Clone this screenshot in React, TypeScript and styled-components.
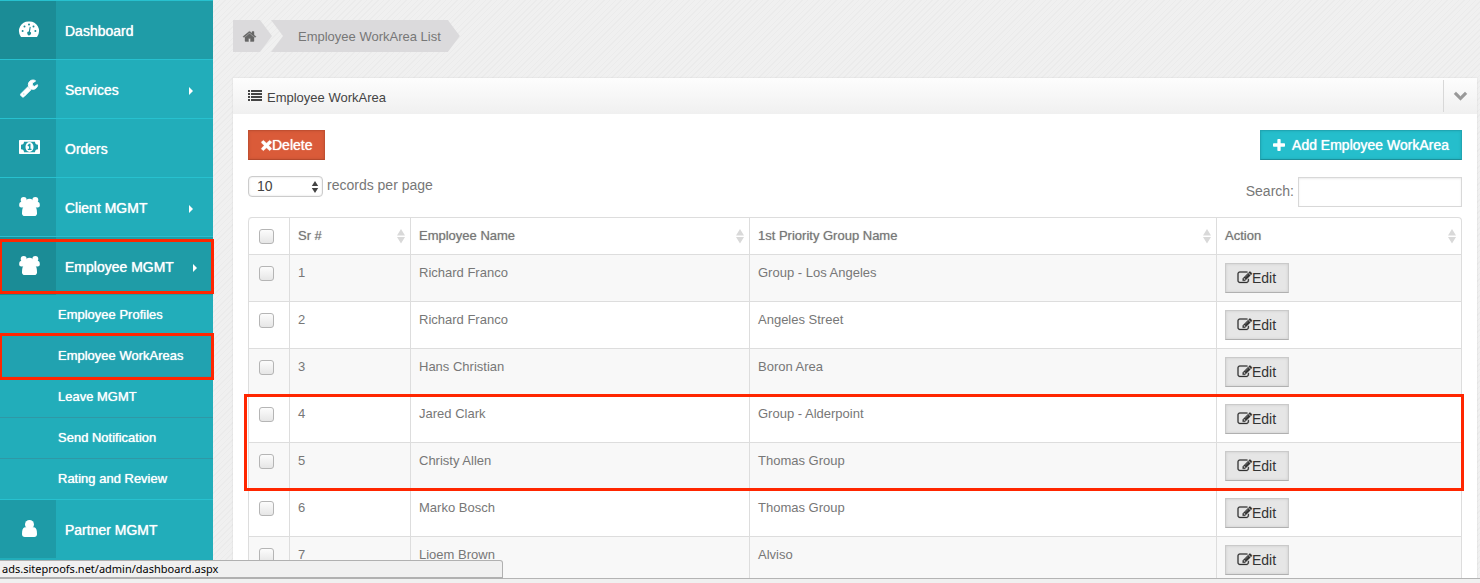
import React from "react";
import styled, { createGlobalStyle, css } from "styled-components";

const GlobalStyle = createGlobalStyle`
  *, *::before, *::after { box-sizing: border-box; }
  body {
    margin: 0;
    font-family: "Liberation Sans", Arial, sans-serif;
    font-size: 13px;
    line-height: 20px;
    color: #777;
  }
`;

/* ---------- icons ---------- */

type GlyphShape = { box: string; d: string; stroke?: number };

const glyphs = {
  home: {
    box: "64 64 1664 1664",
    stroke: 50,
    d: "M1472 992v480q0 26-19 45t-45 19h-384v-384h-256v384h-384q-26 0-45-19t-19-45v-480q0-1 .5-3t.5-3l575-474 575 474q1 2 1 6zm223-69l-62 74q-8 9-21 11h-3q-13 0-21-7l-692-577-692 577q-12 8-24 7-13-2-21-11l-62-74q-8-10-7-23.5t11-21.5l719-599q32-26 76-26t76 26l244 204v-195q0-14 9-23t23-9h192q14 0 23 9t9 23v408l219 182q10 8 11 21.5t-7 23.5z",
  },
  remove: {
    box: "256 320 1280 1280",
    stroke: 40,
    d: "M1490 1322q0 40-28 68l-136 136q-28 28-68 28t-68-28l-294-294-294 294q-28 28-68 28t-68-28l-136-136q-28-28-28-68t28-68l294-294-294-294q-28-28-28-68t28-68l136-136q28-28 68-28t68 28l294 294 294-294q28-28 68-28t68 28l136 136q28 28 28 68t-28 68l-294 294 294 294q28 28 28 68z",
  },
  plus: {
    box: "192 128 1408 1408",
    d: "M1600 736v192q0 40-28 68t-68 28h-416v416q0 40-28 68t-68 28h-192q-40 0-68-28t-28-68v-416h-416q-40 0-68-28t-28-68v-192q0-40 28-68t68-28h416v-416q0-40 28-68t68-28h192q40 0 68 28t28 68v416h416q40 0 68 28t28 68z",
  },
  edit: {
    box: "64 64 1728 1728",
    stroke: 36,
    d: "M888 1184l116-116-152-152-116 116v56h96v96h56zm440-720q-16-16-33 1l-350 350q-17 17-1 33t33-1l350-350q17-17 1-33zm80 594v190q0 119-84.5 203.5t-203.5 84.5h-832q-119 0-203.5-84.5t-84.5-203.5v-832q0-119 84.5-203.5t203.5-84.5h832q63 0 117 25 15 7 18 23 3 17-9 29l-49 49q-14 14-32 8-23-6-45-6h-832q-66 0-113 47t-47 113v832q0 66 47 113t113 47h832q66 0 113-47t47-113v-126q0-13 9-22l64-64q15-15 35-7t20 29zm-96-738l288 288-672 672h-288v-288zm444 132l-92 92-288-288 92-92q28-28 68-28t68 28l152 152q28 28 28 68t-28 68z",
  },
  wrench: {
    box: "32 32 1728 1728",
    stroke: 90,
    d: "M448 1472q0-26-19-45t-45-19-45 19-19 45 19 45 45 19 45-19 19-45zm644-420l-682 682q-37 37-90 37-52 0-91-37l-106-108q-38-36-38-90 0-53 38-91l681-681q39 98 114.5 173.5t173.5 114.5zm634-435q0 39-23 106-47 134-164.5 217.5t-258.5 83.5q-185 0-316.5-131.5t-131.5-316.5 131.5-316.5 316.5-131.5q58 0 121.5 16.5t107.5 46.5q16 11 16 28t-16 28l-293 169v224l193 107q5-3 79-48.5t135.5-81 70.5-35.5q15 0 23.5 10t8.5 25z",
  },
  chevron: {
    box: "64 260 1664 1664",
    stroke: 60,
    d: "M1683 808l-742 741q-19 19-45 19t-45-19l-742-741q-19-19-19-45.5t19-45.5l166-165q19-19 45-19t45 19l531 531 531-531q19-19 45-19t45 19l166 165q19 19 19 45.5t-19 45.5z",
  },
} satisfies Record<string, GlyphShape>;

const Svg = styled.svg<{ $w: number; $h: number }>`
  display: block;
  flex: none;
  width: ${(p) => p.$w}px;
  height: ${(p) => p.$h}px;
  fill: currentColor;
  overflow: visible;
`;

const Glyph = ({ name, size = 14 }: { name: keyof typeof glyphs; size?: number }) => {
  const g: GlyphShape = glyphs[name];
  return (
    <Svg $w={size} $h={size} viewBox={g.box} aria-hidden="true">
      <path d={g.d} stroke="currentColor" strokeWidth={g.stroke ?? 0} />
    </Svg>
  );
};

const DashboardIcon = () => (
  <Svg $w={20} $h={17} viewBox="0 0 20 17" aria-hidden="true">
    <path d="M10 .5a9.5 9.5 0 0 0-8.3 14.9q.3.6 1 .6h14.6q.7 0 1-.6A9.5 9.5 0 0 0 10 .5z" />
    <g fill="#1c8c96">
      <circle cx="3.6" cy="10" r="1" />
      <circle cx="5.5" cy="5.6" r="1" />
      <circle cx="10" cy="3.6" r="1" />
      <circle cx="14.5" cy="5.6" r="1" />
      <circle cx="16.4" cy="10" r="1" />
      <path d="M10.7 5.8l1 .2-.7 4.8a1.8 1.8 0 1 1-1.2-.2z" />
    </g>
  </Svg>
);

const MoneyIcon = () => (
  <Svg $w={21} $h={14} viewBox="0 0 21 14" aria-hidden="true">
    <path
      fillRule="evenodd"
      d="M.7 0h19.6q.7 0 .7.7v12.6q0 .7-.7.7H.7q-.7 0-.7-.7V.7Q0 0 .7 0zM5 1.7a3 3 0 0 1-3 3v4.6a3 3 0 0 1 3 3h11a3 3 0 0 1 3-3V4.7a3 3 0 0 1-3-3z"
    />
    <ellipse cx="10.5" cy="7" rx="4" ry="5" />
    <path fill="#1f9ca7" d="M10 3.8h1.5v5h1V10H8.8V8.8H10V5.9l-.8.5-.7-.9z" />
  </Svg>
);

const GroupIcon = () => (
  <Svg $w={21} $h={19} viewBox="0 0 21 19" aria-hidden="true">
    <circle cx="4.7" cy="3" r="3" />
    <circle cx="16.3" cy="3" r="3" />
    <path d="M.2 8Q.2 5 2 5h5v5.500H2.300Q.2 10.500.2 8.800zM20.800 8q0-3-1.800-3h-5v5.500h4.700q2.100 0 2.100-1.700z" />
    <circle cx="10.5" cy="6.500" r="4.700" />
    <path d="M5.500 9h10c1.900.8 2.500 3.500 2.500 7.200 0 1.900-1 2.800-2.700 2.800H5.700C4 19 3 18.100 3 16.200 3 12.500 3.600 9.800 5.500 9z" />
  </Svg>
);

const UserIcon = () => (
  <Svg $w={15} $h={17} viewBox="0 0 15 17" aria-hidden="true">
    <circle cx="7.5" cy="4.500" r="4.500" />
    <path d="M2.800 7.300h9.400C14.400 8 15 10.500 15 14c0 2-1 3-2.800 3H2.800C1 17 0 16 0 14c0-3.500.6-6 2.800-6.700z" />
  </Svg>
);

const ListIcon = () => (
  <Svg $w={14} $h={12} viewBox="0 0 14 12" aria-hidden="true">
    <path d="M0 0h2v2H0zM3 0h11v2H3zM0 3h2v2H0zM3 3h11v2H3zM0 6h2v2H0zM3 6h11v2H3zM0 9h2v2H0zM3 9h11v2H3z" />
  </Svg>
);

const SortIcon = () => (
  <Svg $w={8} $h={16} viewBox="0 0 8 16" aria-hidden="true">
    <path d="M4 1l4 6.5H0zM4 15.5L0 9h8z" />
  </Svg>
);

/* ---------- page frame ---------- */

const Page = styled.div`
  position: relative;
  display: flex;
  flex-direction: column;
  height: 100vh;
  background: #f0f0f0;
`;

const Viewport = styled.div`
  flex: 1;
  min-height: 0;
  display: flex;
  overflow: hidden;
  background-color: #efefef;
  background-image: repeating-linear-gradient(135deg, #f0f0f0 0 3px, #ebebeb 3px 4px);
  border-bottom: 1px solid #b4b4b4;
`;

const WindowEdge = styled.div`
  height: 4px;
  background: #f0f0f0;
`;

const StatusBar = styled.div`
  position: absolute;
  left: 0;
  bottom: 4px;
  z-index: 2;
  width: 34%;
  height: 19px;
  padding-left: 2px;
  border: solid #b0b0b0;
  border-width: 1px 1px 2px 0;
  border-top-right-radius: 3px;
  background: #f0f0f0;
  color: #000;
  font: 11px/16px "Noto Sans", sans-serif;
`;

const outline = css`
  content: "";
  position: absolute;
  border: 3px solid #ff2600;
  pointer-events: none;
`;

/* ---------- sidebar ---------- */

const Sidebar = styled.nav`
  flex: none;
  width: 213px;
  background: #22adba;
  position: relative;
`;

const Menu = styled.ul`
  list-style: none;
  margin: 0;
  padding: 0;
`;

const MenuItem = styled.li<{ $marked?: boolean }>`
  position: relative;
  ${(p) =>
    p.$marked &&
    css`
      &::after {
        ${outline}
        z-index: 1;
        inset: 3px -1px 1px;
      }
    `}
`;

const MenuLink = styled.a<{ $active?: boolean; $open?: boolean }>`
  display: flex;
  align-items: center;
  height: 59px;
  padding-right: ${(p) => (p.$open ? 16 : 20)}px;
  border-top: 1px solid #27c1cf;
  background: ${(p) => (p.$active ? "#1f9ca7" : "transparent")};
  color: #fff;
  font-size: 14px;
  text-decoration: none;
  text-shadow: 0 0 1px #fff;
`;

const MenuIcon = styled.span`
  display: flex;
  align-items: center;
  justify-content: center;
  width: 56px;
  height: 100%;
  padding: 0 0 2px 2px;
  background: rgba(0, 0, 0, 0.1);
`;

const MenuText = styled.span`
  flex: 1;
  padding: 1px 0 0 9px;
`;

const Caret = styled.span`
  margin-top: 4px;
  border: solid transparent;
  border-width: 4px 0 4px 4px;
  border-left-color: #fff;
`;

const SubLink = styled.a<{ $active?: boolean }>`
  display: block;
  padding: 10px 0 10px 58px;
  background: ${(p) => (p.$active ? "#21a2b0" : "transparent")};
  color: #fff;
  text-decoration: none;
  text-shadow: 0 0 1px #fff;
`;

const SubItem = styled.li<{ $marked?: boolean }>`
  position: relative;
  & + & {
    border-top: 1px solid #2f98a6;
  }
  ${(p) =>
    p.$marked &&
    css`
      &::after {
        ${outline}
        z-index: 1;
        inset: -3px -1px -4px;
      }
    `}
`;

/* ---------- content ---------- */

const Content = styled.main`
  flex: 1;
  min-width: 0;
  padding: 20px 3px 0 20px;
`;

const Breadcrumb = styled.div`
  display: flex;
  height: 32px;
`;

const HomeCrumb = styled.a`
  display: flex;
  align-items: center;
  width: 39px;
  padding-left: 10px;
  background: #dbdadc;
  color: #666;
  clip-path: polygon(0 0, 27px 0, 100% 50%, 27px 100%, 0 100%);
`;

const Crumb = styled.a`
  display: flex;
  align-items: center;
  margin-left: -1px;
  padding: 2px 19px 0 27px;
  background: #dbdadc;
  color: #777;
  text-decoration: none;
  clip-path: polygon(0 0, calc(100% - 12px) 0, 100% 50%, calc(100% - 12px) 100%, 0 100%, 12px 50%);
`;

const Panel = styled.section`
  margin-top: 26px;
  background: #fff;
  box-shadow: 0 0 2px rgba(0, 0, 0, 0.1);
`;

const PanelHeader = styled.header`
  display: flex;
  align-items: center;
  height: 36px;
  padding-left: 15px;
  background: linear-gradient(#fdfdfd, #f0f0f0);
  color: #444;
`;

const PanelTitle = styled.h1`
  flex: 1;
  margin: 0;
  padding: 3px 0 0 5px;
  font-size: 13px;
  font-weight: normal;
`;

const CollapseButton = styled.button`
  display: flex;
  align-items: center;
  justify-content: center;
  width: 34px;
  height: 32px;
  padding: 0;
  border: 0;
  border-left: 1px solid #d8d8d8;
  background: none;
  color: #999;
`;

const PanelBody = styled.div`
  padding: 16px 15px;
`;

const Toolbar = styled.div`
  display: flex;
  justify-content: space-between;
`;

const variants = {
  danger: css`
    background: #da5b39;
    border-color: #c24f31 #c24f31 #b5482c;
    color: #fff;
    text-shadow: 0 0 1px #fff;
  `,
  primary: css`
    background: #25becc;
    border-color: #20a6b3 #20a6b3 #1c8f9a;
    color: #fff;
    text-shadow: 0 0 1px #fff;
  `,
  plain: css`
    background: #e6e6e6;
    border-color: #cacaca #cacaca #b0b0b0;
    color: #333;
  `,
};

const Button = styled.button<{ $variant: keyof typeof variants; $gap?: number }>`
  display: flex;
  align-items: center;
  gap: ${(p) => p.$gap ?? 0}px;
  height: 30px;
  padding: 0 12px;
  border: 1px solid;
  box-shadow: inset 0 0 3px rgba(0, 0, 0, 0.12);
  font: 14px/20px "Liberation Sans", Arial, sans-serif;
  ${(p) => variants[p.$variant]}
`;

const Filters = styled.div`
  display: flex;
  justify-content: space-between;
  align-items: flex-start;
  margin: 16px 0 10px;
  font-size: 14px;
`;

const LengthLabel = styled.label`
  display: flex;
  gap: 4px;
  line-height: 18px;
`;

const SelectBox = styled.span`
  position: relative;
  display: flex;
  color: #444;

  svg {
    position: absolute;
    right: 4px;
    top: 4px;
    pointer-events: none;
  }
`;

const Select = styled.select`
  appearance: none;
  width: 75px;
  height: 21px;
  padding: 0 8px 2px;
  border: 1px solid #ccc;
  border-radius: 4px;
  background: #fff;
  box-shadow: inset 0 0 2px rgba(0, 0, 0, 0.15);
  color: #444;
  font: 14px/18px "Liberation Sans", Arial, sans-serif;
`;

const SearchLabel = styled.label`
  display: flex;
  gap: 4px;
  padding-top: 1px;
  line-height: 28px;
`;

const SearchInput = styled.input`
  width: 164px;
  height: 30px;
  padding: 4px 6px;
  border: 1px solid #d8d8d8;
  box-shadow: inset 0 1px 2px rgba(0, 0, 0, 0.08);
  font: inherit;
`;

const Table = styled.table`
  width: 100%;
  table-layout: fixed;
  border: 1px solid #ddd;
  border-left: 0;
  border-radius: 4px;
  border-collapse: separate;
  border-spacing: 0;
`;

const Col = styled.col<{ $w?: number }>`
  width: ${(p) => (p.$w ? `${p.$w}px` : "auto")};
`;

const cell = css`
  padding: 8px;
  border-left: 1px solid #ddd;
  text-align: left;
  vertical-align: top;
  line-height: 20px;
`;

const HeadCell = styled.th`
  ${cell}
  font-weight: normal;
  text-shadow: 0 0 1px #aaa;
  &:first-child {
    border-top-left-radius: 4px;
  }
`;

const HeadLabel = styled.span`
  display: flex;
  justify-content: space-between;
  align-items: center;
  margin-right: -3px;
  height: 20px;

  svg {
    color: #d9d9d9;
  }
`;

const Cell = styled.td`
  ${cell}
  border-top: 1px solid #ddd;
`;

const Row = styled.tr<{ $striped: boolean }>`
  background: ${(p) => (p.$striped ? "#f8f8f8" : "#fff")};
`;

const RowGroup = styled.tbody<{ $marked: boolean }>`
  ${(p) =>
    p.$marked &&
    css`
      position: relative;
      &::after {
        ${outline}
        inset: -1px -3px -2px -4px;
      }
    `}
`;

const Checkbox = styled.input`
  appearance: none;
  display: block;
  width: 15px;
  height: 15px;
  margin: 3px 0 2px 2px;
  border: 1px solid #b5b5b5;
  border-radius: 3px;
  background: linear-gradient(#fcfcfc, #e6e6e6);
`;

/* ---------- data ---------- */

const submenu = ["Employee Profiles", "Employee WorkAreas", "Leave MGMT", "Send Notification", "Rating and Review"];

type Entry = { label: string; icon: React.ReactNode; caret?: boolean; active?: boolean; children?: string[] };

const menu: Entry[] = [
  { label: "Dashboard", icon: <DashboardIcon />, active: true },
  { label: "Services", icon: <Glyph name="wrench" size={18} />, caret: true },
  { label: "Orders", icon: <MoneyIcon /> },
  { label: "Client MGMT", icon: <GroupIcon />, caret: true },
  { label: "Employee MGMT", icon: <GroupIcon />, caret: true, active: true, children: submenu },
  { label: "Partner MGMT", icon: <UserIcon /> },
];

type WorkArea = [number, string, string];

const groups: { marked: boolean; rows: WorkArea[] }[] = [
  {
    marked: false,
    rows: [
      [1, "Richard Franco", "Group - Los Angeles"],
      [2, "Richard Franco", "Angeles Street"],
      [3, "Hans Christian", "Boron Area"],
    ],
  },
  {
    marked: true,
    rows: [
      [4, "Jared Clark", "Group - Alderpoint"],
      [5, "Christy Allen", "Thomas Group"],
    ],
  },
  {
    marked: false,
    rows: [
      [6, "Marko Bosch", "Thomas Group"],
      [7, "Lioem Brown", "Alviso"],
    ],
  },
];

export default function App() {
  return (
    <Page>
      <GlobalStyle />
      <Viewport>
        <Sidebar>
          <Menu>
            {menu.map((m) => (
              <React.Fragment key={m.label}>
                <MenuItem $marked={!!m.children}>
                  <MenuLink href="#" $active={m.active} $open={!!m.children}>
                    <MenuIcon>{m.icon}</MenuIcon>
                    <MenuText>{m.label}</MenuText>
                    {m.caret && <Caret />}
                  </MenuLink>
                </MenuItem>
                {m.children && (
                  <li>
                    <Menu>
                      {m.children.map((s) => (
                        <SubItem key={s} $marked={s === "Employee WorkAreas"}>
                          <SubLink href="#" $active={s === "Employee WorkAreas"}>
                            {s}
                          </SubLink>
                        </SubItem>
                      ))}
                    </Menu>
                  </li>
                )}
              </React.Fragment>
            ))}
          </Menu>
        </Sidebar>

        <Content>
          <Breadcrumb>
            <HomeCrumb href="#" aria-label="Home">
              <Glyph name="home" size={13} />
            </HomeCrumb>
            <Crumb href="#">Employee WorkArea List</Crumb>
          </Breadcrumb>

          <Panel>
            <PanelHeader>
              <ListIcon />
              <PanelTitle>Employee WorkArea</PanelTitle>
              <CollapseButton aria-label="Collapse">
                <Glyph name="chevron" size={13} />
              </CollapseButton>
            </PanelHeader>
            <PanelBody>
              <Toolbar>
                <Button $variant="danger">
                  <Glyph name="remove" size={11} />
                  Delete
                </Button>
                <Button $variant="primary" $gap={7}>
                  <Glyph name="plus" size={12} />
                  Add Employee WorkArea
                </Button>
              </Toolbar>

              <Filters>
                <LengthLabel>
                  <SelectBox>
                    <Select defaultValue="10">
                      <option>10</option>
                      <option>25</option>
                    </Select>
                    <Svg $w={8} $h={14} viewBox="0 0 8 14" aria-hidden="true">
                      <path d="M4 1l3.2 5H.8zM4 13L.8 8h6.4z" />
                    </Svg>
                  </SelectBox>
                  records per page
                </LengthLabel>
                <SearchLabel>
                  Search:
                  <SearchInput type="text" />
                </SearchLabel>
              </Filters>

              <Table>
                <colgroup>
                  <Col $w={41} />
                  <Col $w={121} />
                  <Col $w={339} />
                  <Col />
                  <Col $w={245} />
                </colgroup>
                <thead>
                  <tr>
                    <HeadCell>
                      <Checkbox type="checkbox" aria-label="Select all" />
                    </HeadCell>
                    {["Sr #", "Employee Name", "1st Priority Group Name", "Action"].map((h) => (
                      <HeadCell key={h}>
                        <HeadLabel>
                          {h}
                          <SortIcon />
                        </HeadLabel>
                      </HeadCell>
                    ))}
                  </tr>
                </thead>
                {groups.map((g, i) => (
                  <RowGroup key={i} $marked={g.marked}>
                    {g.rows.map(([id, name, group]) => (
                      <Row key={id} $striped={id % 2 === 1}>
                        <Cell>
                          <Checkbox type="checkbox" aria-label={`Select ${name}`} />
                        </Cell>
                        <Cell>{id}</Cell>
                        <Cell>{name}</Cell>
                        <Cell>{group}</Cell>
                        <Cell>
                          <Button $variant="plain">
                            <Glyph name="edit" />
                            Edit
                          </Button>
                        </Cell>
                      </Row>
                    ))}
                  </RowGroup>
                ))}
              </Table>
            </PanelBody>
          </Panel>
        </Content>
      </Viewport>
      <WindowEdge />
      <StatusBar>ads.siteproofs.net/admin/dashboard.aspx</StatusBar>
    </Page>
  );
}
